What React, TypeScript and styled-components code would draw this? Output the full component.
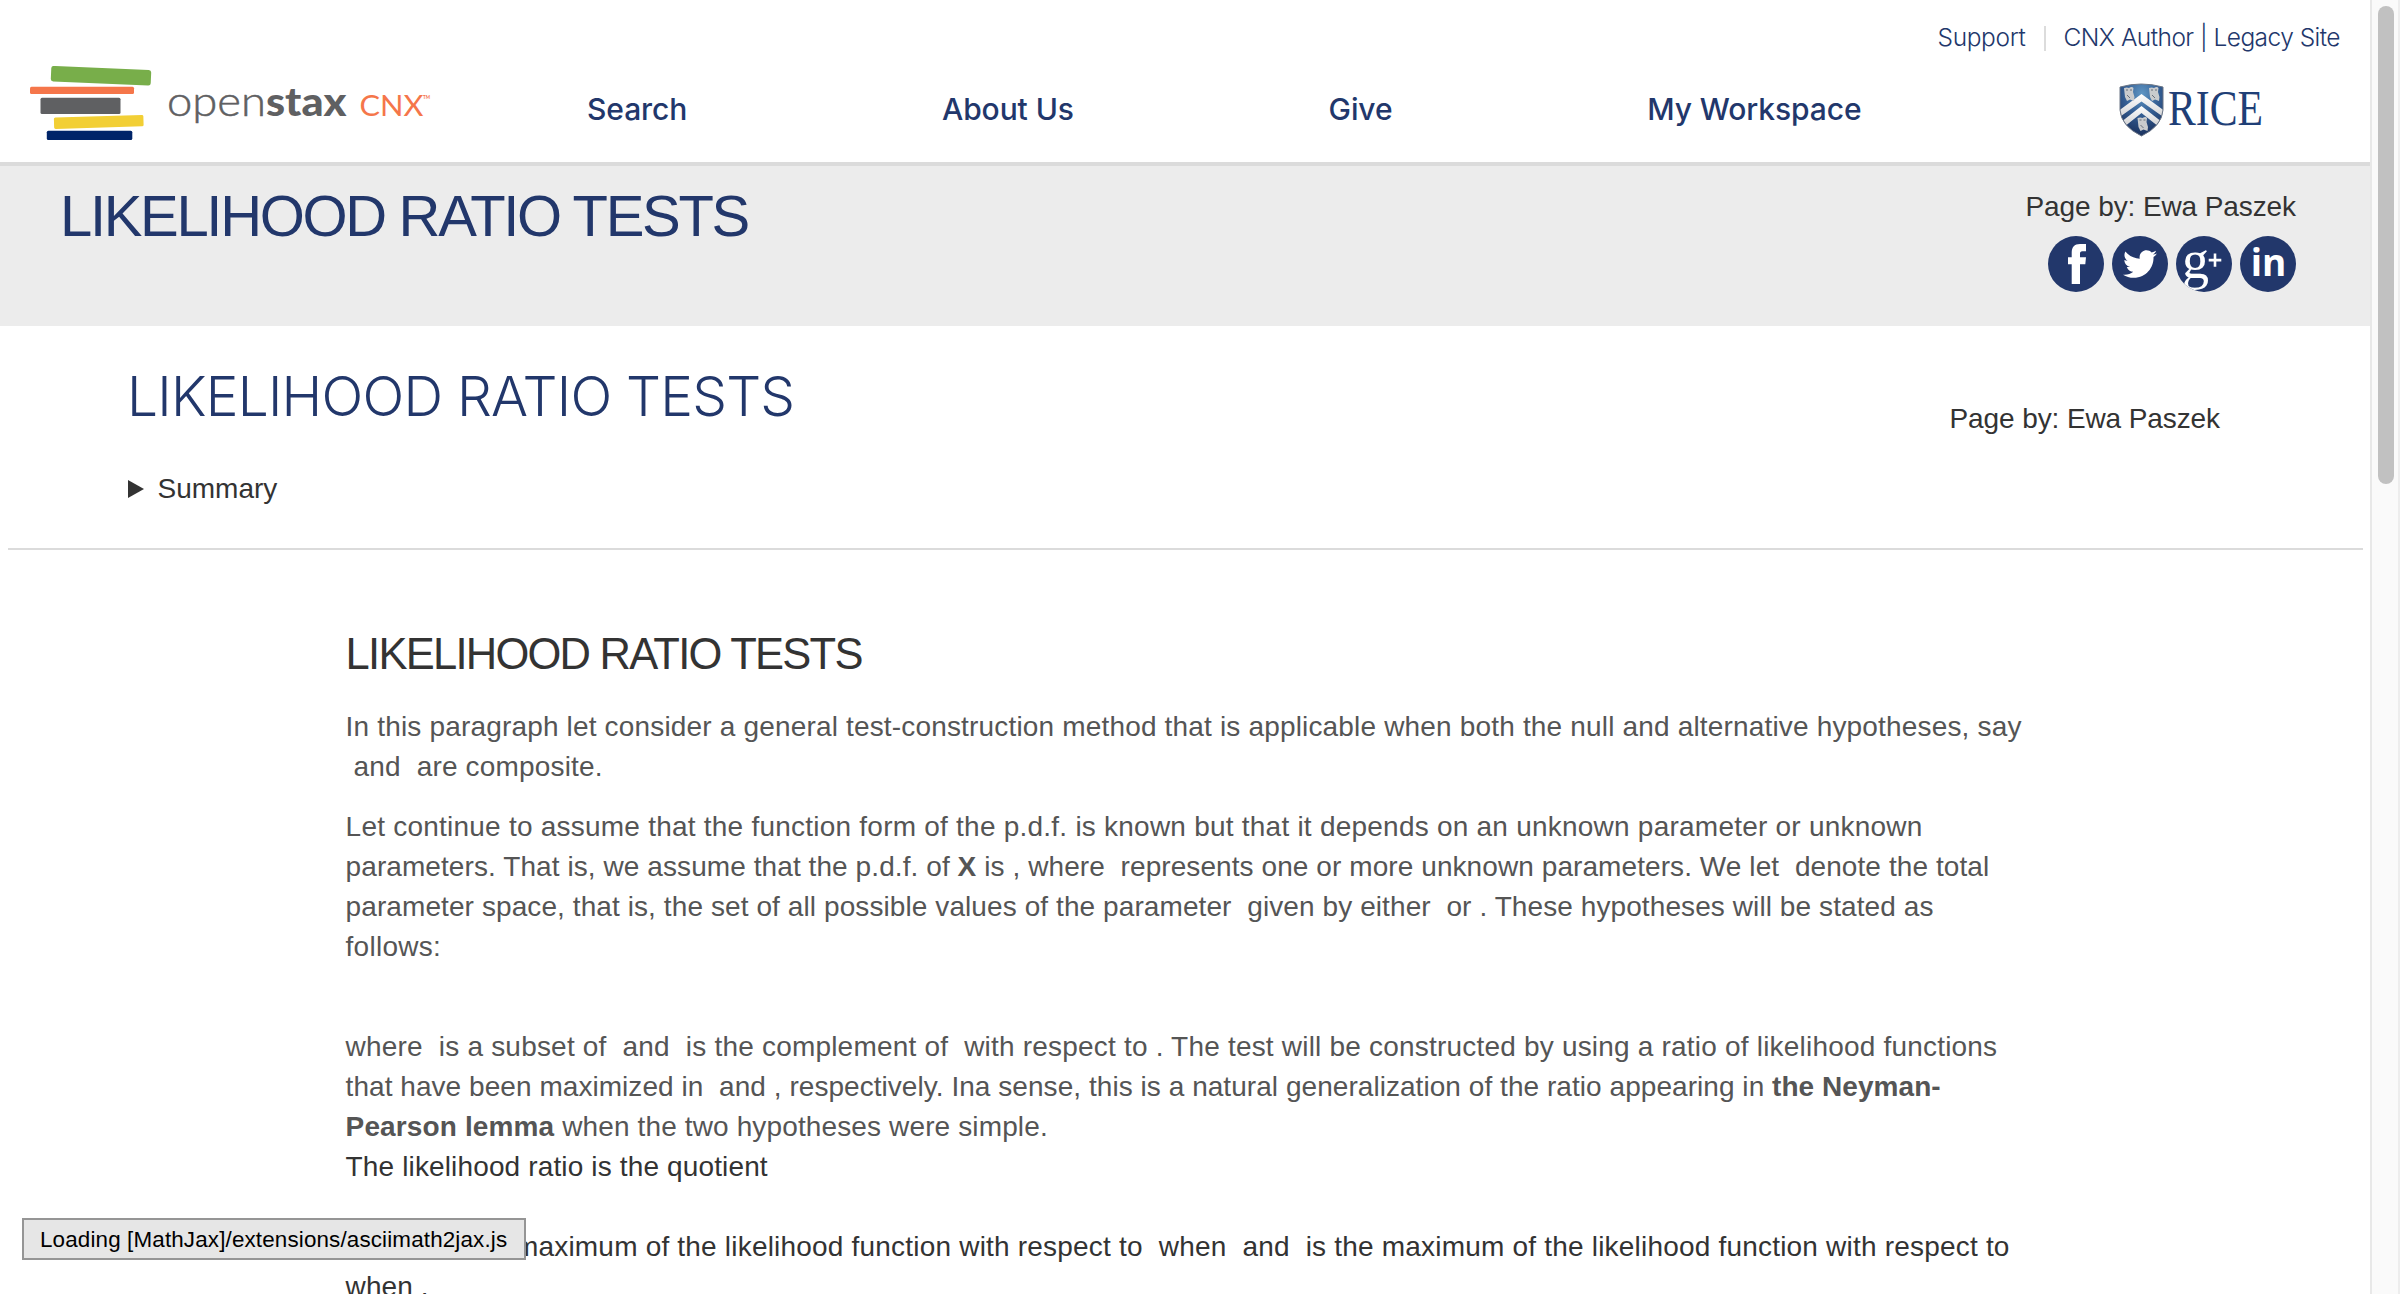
import React from 'react';
import styled, { createGlobalStyle } from 'styled-components';
import { FaTwitter } from 'react-icons/fa';

const navy = '#22376b';
const sans = '"Liberation Sans", Arial, sans-serif';
const inter = 'Inter, "Liberation Sans", sans-serif';

const GlobalStyle = createGlobalStyle`
  * { box-sizing: border-box; }
  html, body { margin: 0; height: 100%; overflow: hidden; }
  body { background: #fff; font-family: ${sans}; color: #333; }
  h1, h2, p { margin: 0; font-weight: 400; }
  a { color: inherit; text-decoration: none; }
`;

const Shell = styled.div`
  display: flex;
  height: 1294px;
  overflow: hidden;
`;

const Page = styled.div`
  flex: 1;
  min-width: 0;
  display: flex;
  flex-direction: column;
`;

const ScrollTrack = styled.div`
  width: 30px;
  padding: 6px 4px 0 6px;
  background: #fafafa;
  border-left: 2px solid #e8e8e8;
  border-right: 2px solid #ededed;
`;

const ScrollThumb = styled.div`
  width: 16px;
  height: 478px;
  border-radius: 8px;
  background: #c1c1c1;
`;

const Header = styled.header`
  flex: none;
  height: 166px;
  border-bottom: 4px solid #dbdbdb;
`;

const TopLinks = styled.nav`
  display: flex;
  justify-content: flex-end;
  align-items: center;
  height: 74px;
  padding-right: 30px;
  font: 300 24.5px/30px ${inter};
  color: ${navy};
`;

const TopLink = styled.a<{ $tracking: number }>`
  white-space: pre;
  letter-spacing: ${(p) => p.$tracking}px;
`;

const Separator = styled.span`
  width: 2px;
  height: 25px;
  margin: 3px 18px 0;
  background: #dcdcdc;
`;

const MainBar = styled.div`
  display: flex;
  align-items: flex-start;
  height: 88px;
  margin-top: -12px;
  padding-left: 30px;
`;

const Brand = styled.a`
  width: 557px;
  svg { display: block; margin-top: 4px; }
`;

const MainNav = styled.nav`
  display: flex;
  gap: 254.7px;
  padding-top: 29px;
  font: 500 30px/36px ${inter};
  letter-spacing: -0.08px;
  color: ${navy};
  white-space: nowrap;
`;

const Rice = styled.a`
  margin-left: auto;
  margin-right: 103px;
  padding-top: 21px;
  svg { display: block; overflow: visible; }
`;

const TitleBand = styled.section`
  flex: none;
  display: flex;
  justify-content: space-between;
  height: 160px;
  padding: 0 74px 0 60px;
  background: #ececec;
`;

const BandTitle = styled.h1`
  padding-top: 17px;
  font-size: 58px;
  line-height: 66px;
  letter-spacing: -2.33px;
  color: ${navy};
`;

const Byline = styled.div`
  display: flex;
  flex-direction: column;
  align-items: flex-end;
  padding-top: 21px;
`;

const Author = styled.p`
  font-size: 28px;
  line-height: 40px;
  letter-spacing: -0.1px;
  white-space: nowrap;
`;

const Social = styled.div`
  display: flex;
  gap: 8px;
  margin-top: 9px;
`;

const Round = styled.a`
  display: flex;
  align-items: center;
  justify-content: center;
  width: 56px;
  height: 56px;
  border-radius: 50%;
  overflow: hidden;
  background: ${navy};
  color: #fff;
`;

const Intro = styled.section`
  flex: none;
  display: flex;
  justify-content: space-between;
  height: 224px;
  margin: 0 7px 0 8px;
  padding: 0 143px 0 118px;
  border-bottom: 2px solid #dbdbdb;
`;

const IntroTitle = styled.h1`
  padding: 37px 0 0 1px;
  font: 300 55px/66px ${inter};
  letter-spacing: -0.78px;
  color: ${navy};
`;

const IntroAuthor = styled(Author)`
  padding-top: 73px;
`;

const Summary = styled.div`
  display: flex;
  align-items: center;
  gap: 13.5px;
  margin-top: 40px;
  margin-left: 2px;
  font-size: 28px;
  line-height: 40px;
`;

const Triangle = styled.span`
  border-left: 16px solid #333;
  border-top: 9.5px solid transparent;
  border-bottom: 9.5px solid transparent;
`;

const Content = styled.article`
  padding: 79px 0 0 345.6px;
`;

const Heading = styled.h2`
  font-size: 43.5px;
  line-height: 50px;
  letter-spacing: -1.74px;
  margin-bottom: 28px;
`;

const Para = styled.p<{ $dark?: boolean; $gap?: number }>`
  font-size: 28px;
  line-height: 40px;
  color: ${(p) => (p.$dark ? '#333' : '#555')};
  margin-bottom: ${(p) => p.$gap ?? 0}px;
`;

const Line = styled.span<{ $tracking: number }>`
  display: block;
  white-space: pre;
  letter-spacing: ${(p) => p.$tracking}px;
`;

const LoadingMessage = styled.div`
  position: fixed;
  left: 22px;
  top: 1218px;
  width: 504px;
  height: 42px;
  padding-left: 16px;
  border: 2px solid #959595;
  background: #e6e6e6;
  color: #000;
  font-size: 22.4px;
  line-height: 40px;
  letter-spacing: 0.15px;
  white-space: nowrap;
`;

function OpenStaxLogo() {
  return (
    <svg width="404" height="76" viewBox="30 66 404 76">
      <rect x="51" y="68" width="100" height="15.5" rx="2.5" fill="#78ae4a" transform="rotate(2.5 101 75.8)" />
      <rect x="30" y="86.7" width="104" height="7.3" rx="1.5" fill="#f5764a" />
      <rect x="40.5" y="97.8" width="80" height="16.2" rx="1.5" fill="#5f6062" />
      <rect x="54" y="116.2" width="89.5" height="11.4" rx="1.5" fill="#f2cf35" transform="rotate(-1.7 98.7 121.9)" />
      <rect x="46.8" y="130.7" width="85.5" height="9.3" rx="1.5" fill="#002469" />
      <g fontFamily="Lato, sans-serif">
        <text x="167" y="115.5" fontSize="41" fontWeight="300" fill="#5f6062" stroke="#5f6062" strokeWidth="0.5" textLength="99" lengthAdjust="spacingAndGlyphs">open</text>
        <text x="266" y="115.5" fontSize="40" fontWeight="900" fill="#5f6062" textLength="80.5" lengthAdjust="spacingAndGlyphs">stax</text>
        <text x="359.5" y="115.5" fontSize="28" fontWeight="400" fill="#f5764a" textLength="64" lengthAdjust="spacingAndGlyphs">CNX</text>
        <text x="423" y="99" fontSize="6" fontWeight="700" fill="#f5764a" textLength="7" lengthAdjust="spacingAndGlyphs">TM</text>
      </g>
    </svg>
  );
}

function Owl({ x, y }: { x: number; y: number }) {
  return (
    <g transform={`translate(${x} ${y})`}>
      <path d="M-5 -6 Q-2 -7 0 -6 Q3 -8 4.5 -6 L4 -2 L5.5 3 L5 7 L1 5.5 L-2 7 L-4 3 Z" fill="#c9cbcd" />
      <path d="M-3 -4h2M1 -4h2M-2 1l3 3" stroke="#5c6572" strokeWidth="0.9" fill="none" />
    </g>
  );
}

function RiceLogo() {
  return (
    <svg width="148" height="60" viewBox="0 0 148 60">
      <defs>
        <radialGradient id="shield" cx="0.5" cy="0.2" r="0.75">
          <stop offset="0" stopColor="#5f96c4" />
          <stop offset="0.5" stopColor="#355f94" />
          <stop offset="1" stopColor="#1d3562" />
        </radialGradient>
        <linearGradient id="chevron" x1="0" x2="0" y1="0" y2="1">
          <stop offset="0" stopColor="#ffffff" />
          <stop offset="1" stopColor="#d2d3d5" />
        </linearGradient>
        <clipPath id="shieldClip">
          <path d="M1 4 Q22 -2 44 4 V27 Q43 43 22.5 53 Q2 43 1 27 Z" />
        </clipPath>
      </defs>
      <g clipPath="url(#shieldClip)">
        <rect width="46" height="54" fill="url(#shield)" />
        <path d="M0 27.5 L22.5 11 L45 27.5 V34.5 L22.5 18.5 L0 34.5 Z" fill="url(#chevron)" />
        <path d="M4 37.5 L22.5 23 L41 37.5 L37.5 42 L22.5 30 L7.5 42 Z" fill="url(#chevron)" />
        <Owl x={10} y={11} />
        <Owl x={35} y={11} />
        <Owl x={23.5} y={41} />
      </g>
      <path d="M1 4 Q22 -2 44 4 V27 Q43 43 22.5 53 Q2 43 1 27 Z" fill="none" stroke="#6b7585" strokeWidth="1" />
      <text x="49" y="42" fontFamily='"Liberation Serif", serif' fontSize="50" fill="#1f3f77" textLength="95" lengthAdjust="spacingAndGlyphs">RICE</text>
    </svg>
  );
}

const FacebookMark = () => (
  <svg width="56" height="56" viewBox="0 0 56 56" fill="currentColor">
    <path d="M23.7 48V28.3H20v-7h3.7v-4.5C23.7 11 26.4 8 32 8h6v7.2h-3.6c-2 0-2.4.9-2.4 2.6v3.5h6l-.7 7H32V48z" />
  </svg>
);

const GooglePlusMark = () => (
  <svg width="56" height="56" viewBox="0 0 56 56" fill="currentColor">
    <text x="6" y="42" fontFamily='"Liberation Serif", serif' fontSize="54">g</text>
    <path d="M37.7 17.5h2.6v5.3h5v2.6h-5v5.3h-2.6v-5.3h-5v-2.6h5z" />
  </svg>
);

const LinkedInMark = () => (
  <svg width="56" height="56" viewBox="0 0 56 56" fill="currentColor">
    <text x="10.8" y="40" fontFamily='"Open Sans", sans-serif' fontWeight="700" fontSize="37">in</text>
  </svg>
);

export default function App() {
  return (
    <>
      <GlobalStyle />
      <Shell>
        <Page>
          <Header>
            <TopLinks>
              <TopLink $tracking={-0.35}>Support</TopLink>
              <Separator />
              <TopLink $tracking={-0.54}>CNX Author | Legacy Site</TopLink>
            </TopLinks>
            <MainBar>
              <Brand><OpenStaxLogo /></Brand>
              <MainNav>
                <a>Search</a>
                <a>About Us</a>
                <a>Give</a>
                <a>My Workspace</a>
              </MainNav>
              <Rice><RiceLogo /></Rice>
            </MainBar>
          </Header>

          <TitleBand>
            <BandTitle>LIKELIHOOD RATIO TESTS</BandTitle>
            <Byline>
              <Author>Page by: Ewa Paszek</Author>
              <Social>
                <Round><FacebookMark /></Round>
                <Round><FaTwitter size={34} /></Round>
                <Round><GooglePlusMark /></Round>
                <Round><LinkedInMark /></Round>
              </Social>
            </Byline>
          </TitleBand>

          <Intro>
            <div>
              <IntroTitle>LIKELIHOOD RATIO TESTS</IntroTitle>
              <Summary><Triangle />Summary</Summary>
            </div>
            <IntroAuthor>Page by: Ewa Paszek</IntroAuthor>
          </Intro>

          <Content>
            <Heading>LIKELIHOOD RATIO TESTS</Heading>
            <Para $gap={20}>
              <Line $tracking={0.17}>In this paragraph let consider a general test-construction method that is applicable when both the null and alternative hypotheses, say</Line>
              <Line $tracking={0.17}>{' and  are composite.'}</Line>
            </Para>
            <Para $gap={60}>
              <Line $tracking={0.23}>Let continue to assume that the function form of the p.d.f. is known but that it depends on an unknown parameter or unknown</Line>
              <Line $tracking={0.08}>parameters. That is, we assume that the p.d.f. of <b>X</b>{' is , where  represents one or more unknown parameters. We let  denote the total'}</Line>
              <Line $tracking={0.09}>{'parameter space, that is, the set of all possible values of the parameter  given by either  or . These hypotheses will be stated as'}</Line>
              <Line $tracking={0.25}>follows:</Line>
            </Para>
            <Para>
              <Line $tracking={0.2}>{'where  is a subset of  and  is the complement of  with respect to . The test will be constructed by using a ratio of likelihood functions'}</Line>
              <Line $tracking={0.05}>{'that have been maximized in  and , respectively. Ina sense, this is a natural generalization of the ratio appearing in '}<b>the Neyman-</b></Line>
              <Line $tracking={0.13}><b>Pearson lemma</b> when the two hypotheses were simple.</Line>
            </Para>
            <Para $dark $gap={40}>
              <Line $tracking={0.14}>The likelihood ratio is the quotient</Line>
            </Para>
            <Para $dark>
              <Line $tracking={0.2}>{'where  is the maximum of the likelihood function with respect to  when  and  is the maximum of the likelihood function with respect to'}</Line>
              <Line $tracking={0.1}>when .</Line>
            </Para>
          </Content>
        </Page>
        <ScrollTrack><ScrollThumb /></ScrollTrack>
      </Shell>
      <LoadingMessage>Loading [MathJax]/extensions/asciimath2jax.js</LoadingMessage>
    </>
  );
}
